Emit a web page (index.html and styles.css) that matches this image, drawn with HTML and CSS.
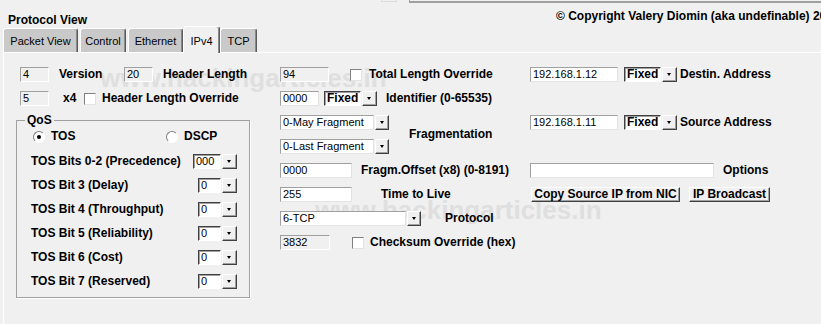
FILE: index.html
```html
<!DOCTYPE html>
<html lang="en">
<head>
  <meta charset="UTF-8" />
  <title>Protocol View</title>
  <link rel="stylesheet" href="styles.css">
</head>
<body>
  <div class="top-strip">
    <span class="stub-box"></span>
    <span class="stub-field"></span>
  </div>

  <div class="header">
    <div class="title">Protocol View</div>
    <div class="copyright">© Copyright Valery Diomin (aka undefinable) 2002-2011</div>
  </div>

  <div class="tabs">
    <div class="tab tab-packet">Packet View</div>
    <div class="tab tab-control">Control</div>
    <div class="tab tab-eth">Ethernet</div>
    <div class="tab tab-ipv4 active">IPv4</div>
    <div class="tab tab-tcp">TCP</div>
  </div>

  <div class="panel">
    <div class="watermark wm-1">www.hackingarticles.in</div>
    <div class="watermark wm-2">www.hackingarticles.in</div>

    <!-- left column -->
    <div class="col col-left">
      <div class="row row-indent">
        <span class="field readonly w-29">4</span>
        <span class="label ml-10 w-65">Version</span>
        <span class="field readonly w-29">20</span>
        <span class="label ml-10">Header Length</span>
      </div>
      <div class="row row-indent">
        <span class="field readonly w-29">5</span>
        <span class="label ml-14 w-21">x4</span>
        <span class="check"></span>
        <span class="label ml-6">Header Length Override</span>
      </div>

      <fieldset class="qos">
        <legend>QoS</legend>
        <div class="qos-body">
          <div class="row radio-row">
            <span class="radio-opt first"><span class="radio on"></span><span class="label ml-6">TOS</span></span>
            <span class="radio-opt"><span class="radio"></span><span class="label ml-6">DSCP</span></span>
          </div>
          <div class="row tos-row">
            <span class="label">TOS Bits 0-2 (Precedence)</span>
            <span class="combo push"><span class="combo-box w-28">000</span><span class="drop"></span></span>
          </div>
          <div class="row tos-row">
            <span class="label">TOS Bit 3 (Delay)</span>
            <span class="combo push"><span class="combo-box w-23">0</span><span class="drop"></span></span>
          </div>
          <div class="row tos-row">
            <span class="label">TOS Bit 4 (Throughput)</span>
            <span class="combo push"><span class="combo-box w-23">0</span><span class="drop"></span></span>
          </div>
          <div class="row tos-row">
            <span class="label">TOS Bit 5 (Reliability)</span>
            <span class="combo push"><span class="combo-box w-23">0</span><span class="drop"></span></span>
          </div>
          <div class="row tos-row">
            <span class="label">TOS Bit 6 (Cost)</span>
            <span class="combo push"><span class="combo-box w-23">0</span><span class="drop"></span></span>
          </div>
          <div class="row tos-row">
            <span class="label">TOS Bit 7 (Reserved)</span>
            <span class="combo push"><span class="combo-box w-23">0</span><span class="drop"></span></span>
          </div>
        </div>
      </fieldset>
    </div>

    <!-- middle column -->
    <div class="col col-mid">
      <div class="row">
        <span class="field readonly w-49">94</span>
        <span class="check ml-21"></span>
        <span class="label ml-7">Total Length Override</span>
      </div>
      <div class="row">
        <span class="field w-39">0000</span>
        <span class="combo ml-5"><span class="combo-box bold w-37">Fixed</span><span class="drop"></span></span>
        <span class="label ml-9">Identifier (0-65535)</span>
      </div>
      <div class="frag">
        <div class="frag-selects">
          <div class="combo"><span class="field w-94">0-May Fragment</span><span class="drop narrow"></span></div>
          <div class="combo"><span class="field w-94">0-Last Fragment</span><span class="drop narrow"></span></div>
        </div>
        <span class="label ml-20">Fragmentation</span>
      </div>
      <div class="row">
        <span class="field w-72">0000</span>
        <span class="label ml-9">Fragm.Offset (x8) (0-8191)</span>
      </div>
      <div class="row">
        <span class="field w-72">255</span>
        <span class="label ml-29">Time to Live</span>
      </div>
      <div class="row">
        <span class="combo"><span class="field w-126">6-TCP</span><span class="drop narrow"></span></span>
        <span class="label ml-24">Protocol</span>
      </div>
      <div class="row">
        <span class="field readonly w-50">3832</span>
        <span class="check ml-22"></span>
        <span class="label ml-6">Checksum Override (hex)</span>
      </div>
    </div>

    <!-- right column -->
    <div class="col col-right">
      <div class="row">
        <span class="field w-88">192.168.1.12</span>
        <span class="combo ml-6"><span class="combo-box bold w-37">Fixed</span><span class="drop"></span></span>
        <span class="label ml-3">Destin. Address</span>
      </div>
      <div class="row"></div>
      <div class="row">
        <span class="field w-88">192.168.1.11</span>
        <span class="combo ml-6"><span class="combo-box bold w-37">Fixed</span><span class="drop"></span></span>
        <span class="label ml-3">Source Address</span>
      </div>
      <div class="row"></div>
      <div class="row">
        <span class="field w-184"></span>
        <span class="label ml-9">Options</span>
      </div>
      <div class="row">
        <span class="btn ml-1 w-149">Copy Source IP from NIC</span>
        <span class="btn ml-9 w-81">IP Broadcast</span>
      </div>
    </div>
  </div>
</body>
</html>
```

FILE: styles.css
```css
* {
  box-sizing: border-box;
}

body {
  margin: 0;
  background: #f0f0f0;
  color: #000;
  font-family: "Liberation Sans", Arial, sans-serif;
  font-size: 11px;
  overflow: hidden;
}

/* bits of the window above, cut off */
.top-strip {
  display: flex;
  height: 3px;
}

.stub-box {
  margin-left: 381px;
  width: 16px;
  height: 2px;
  border: 1px solid #dcdcdc;
  border-top: none;
}

.stub-field {
  flex: 1;
  margin-left: 12px;
  height: 3px;
  border-left: 1px solid #a0a0a0;
  border-bottom: 2px solid #a0a0a0;
}

.header {
  display: grid;
  grid-template-columns: 548px minmax(0, 1fr);
  height: 23px;
  padding-left: 8px;
  font-size: 12px;
  font-weight: bold;
  line-height: 14px;
  white-space: nowrap;
}

.title {
  padding-top: 10px;
}

.copyright {
  padding-top: 6px;
  overflow: hidden;
}

/* tabs */
.tabs {
  display: flex;
  align-items: flex-end;
  gap: 2px;
  height: 26px;
  padding-left: 3px;
}

.tab {
  height: 24px;
  padding-top: 6px;
  line-height: 13px;
  text-align: center;
  background: #c9c9c9;
  border-top: 1px solid #fff;
  border-left: 1px solid #fff;
  border-right: 1px solid #5a5a5a;
  box-shadow: inset -1px 0 0 #8a8a8a;
  border-radius: 3px 3px 0 0;
}

.tab.active {
  position: relative;
  z-index: 1;
  height: 27px;
  margin: 0 -2px -1px;
  padding-top: 8px;
  background: #f0f0f0;
}

.tab-packet { width: 75px; }
.tab-control { width: 46px; }
.tab-eth { width: 55px; }
.tab-ipv4 { width: 37px; }
.tab-tcp { width: 37px; }

/* panel */
.panel {
  position: relative;
  z-index: 0;
  display: flex;
  align-items: flex-start;
  min-height: 272px;
  margin-left: 3px;
  padding: 14px 0 0 12px;
  border-top: 1px solid #fff;
  border-left: 1px solid #fff;
}

.watermark {
  position: absolute;
  z-index: -1;
  font-size: 26px;
  font-weight: bold;
  line-height: 1;
  color: #dfdfdf;
  white-space: nowrap;
  pointer-events: none;
}

.wm-1 { left: 96px; top: 12px; }
.wm-2 { left: 311px; top: 144px; }

.col {
  display: flex;
  flex-direction: column;
  gap: 9px;
}

.col-left { width: 234px; }
.col-mid { width: 250px; margin-left: 30px; }

.row {
  display: flex;
  align-items: center;
  height: 15px;
}

.row-indent { padding-left: 4px; }

.label {
  flex: none;
  font-size: 12px;
  font-weight: bold;
  line-height: 15px;
  white-space: nowrap;
}

.field {
  flex: none;
  display: block;
  height: 15px;
  padding: 0 2px;
  line-height: 13px;
  background: #fff;
  border: 1px solid;
  border-color: #a0a0a0 #e3e3e3 #e3e3e3 #a0a0a0;
  white-space: nowrap;
  overflow: hidden;
}

.field.readonly {
  background: #f0f0f0;
  border-color: #a0a0a0 #fff #fff #a0a0a0;
}

.combo {
  flex: none;
  display: flex;
}

.combo-box {
  height: 15px;
  padding: 0 2px;
  line-height: 13px;
  background: #fff;
  border: 1px solid;
  border-color: #404040 #fff #fff #404040;
  box-shadow: inset 1px 1px 0 #a0a0a0;
  white-space: nowrap;
}

.combo-box.bold {
  font-size: 12px;
  font-weight: bold;
}

.drop {
  position: relative;
  flex: none;
  width: 15px;
  height: 15px;
  margin-left: 1px;
  background: #f0f0f0;
  border: 1px solid;
  border-color: #fff #404040 #404040 #fff;
  box-shadow: inset -1px -1px 0 #a0a0a0;
}

.drop.narrow { width: 14px; }

.drop::after {
  content: "";
  position: absolute;
  left: 4px;
  top: 5px;
  border-style: solid;
  border-width: 3px 2.5px 0;
  border-color: #000 transparent transparent;
}

.check {
  flex: none;
  width: 12px;
  height: 12px;
  background: #fff;
  border: 1px solid;
  border-color: #808080 #e3e3e3 #e3e3e3 #808080;
}

.radio-opt {
  display: flex;
  align-items: center;
}

.radio-opt.first { width: 133px; }

.radio {
  position: relative;
  flex: none;
  width: 12px;
  height: 12px;
  border-radius: 50%;
  background: #fff;
  border: 1px solid;
  border-color: #808080 #fff #fff #808080;
}

.radio.on::after {
  content: "";
  position: absolute;
  left: 3px;
  top: 3px;
  width: 4px;
  height: 4px;
  border-radius: 50%;
  background: #000;
}

.btn {
  flex: none;
  height: 15px;
  line-height: 13px;
  font-size: 12px;
  font-weight: bold;
  text-align: center;
  white-space: nowrap;
  background: #f0f0f0;
  border: 1px solid;
  border-color: #fff #404040 #404040 #fff;
  box-shadow: inset -1px -1px 0 #a0a0a0;
}

/* QoS group */
.qos {
  min-width: 0;
  margin: -2px 0 0;
  padding: 2px 0 8px;
  border: 1px solid #a0a0a0;
  box-shadow: 1px 1px 0 #fff;
}

.qos legend {
  margin-left: 8px;
  padding: 0 2px;
  font-size: 12px;
  font-weight: bold;
  line-height: 14px;
}

.qos-body {
  display: flex;
  flex-direction: column;
  gap: 9px;
}

.radio-row {
  padding-left: 16px;
  margin-bottom: 1px;
}

.tos-row {
  padding: 0 12px 0 14px;
}

.push { margin-left: auto; }

.frag {
  display: flex;
  align-items: center;
}

.frag-selects {
  display: flex;
  flex-direction: column;
  gap: 9px;
}

/* spacing and widths */
.ml-1 { margin-left: 1px; }
.ml-3 { margin-left: 3px; }
.ml-5 { margin-left: 5px; }
.ml-6 { margin-left: 6px; }
.ml-7 { margin-left: 7px; }
.ml-9 { margin-left: 9px; }
.ml-10 { margin-left: 10px; }
.ml-14 { margin-left: 14px; }
.ml-20 { margin-left: 20px; }
.ml-21 { margin-left: 21px; }
.ml-22 { margin-left: 22px; }
.ml-24 { margin-left: 24px; }
.ml-29 { margin-left: 29px; }

.w-21 { width: 21px; }
.w-23 { width: 23px; }
.w-28 { width: 28px; }
.w-29 { width: 29px; }
.w-37 { width: 37px; }
.w-39 { width: 39px; }
.w-49 { width: 49px; }
.w-50 { width: 50px; }
.w-65 { width: 65px; }
.w-72 { width: 72px; }
.w-81 { width: 81px; }
.w-88 { width: 88px; }
.w-94 { width: 94px; }
.w-126 { width: 126px; }
.w-149 { width: 149px; }
.w-184 { width: 184px; }
```
